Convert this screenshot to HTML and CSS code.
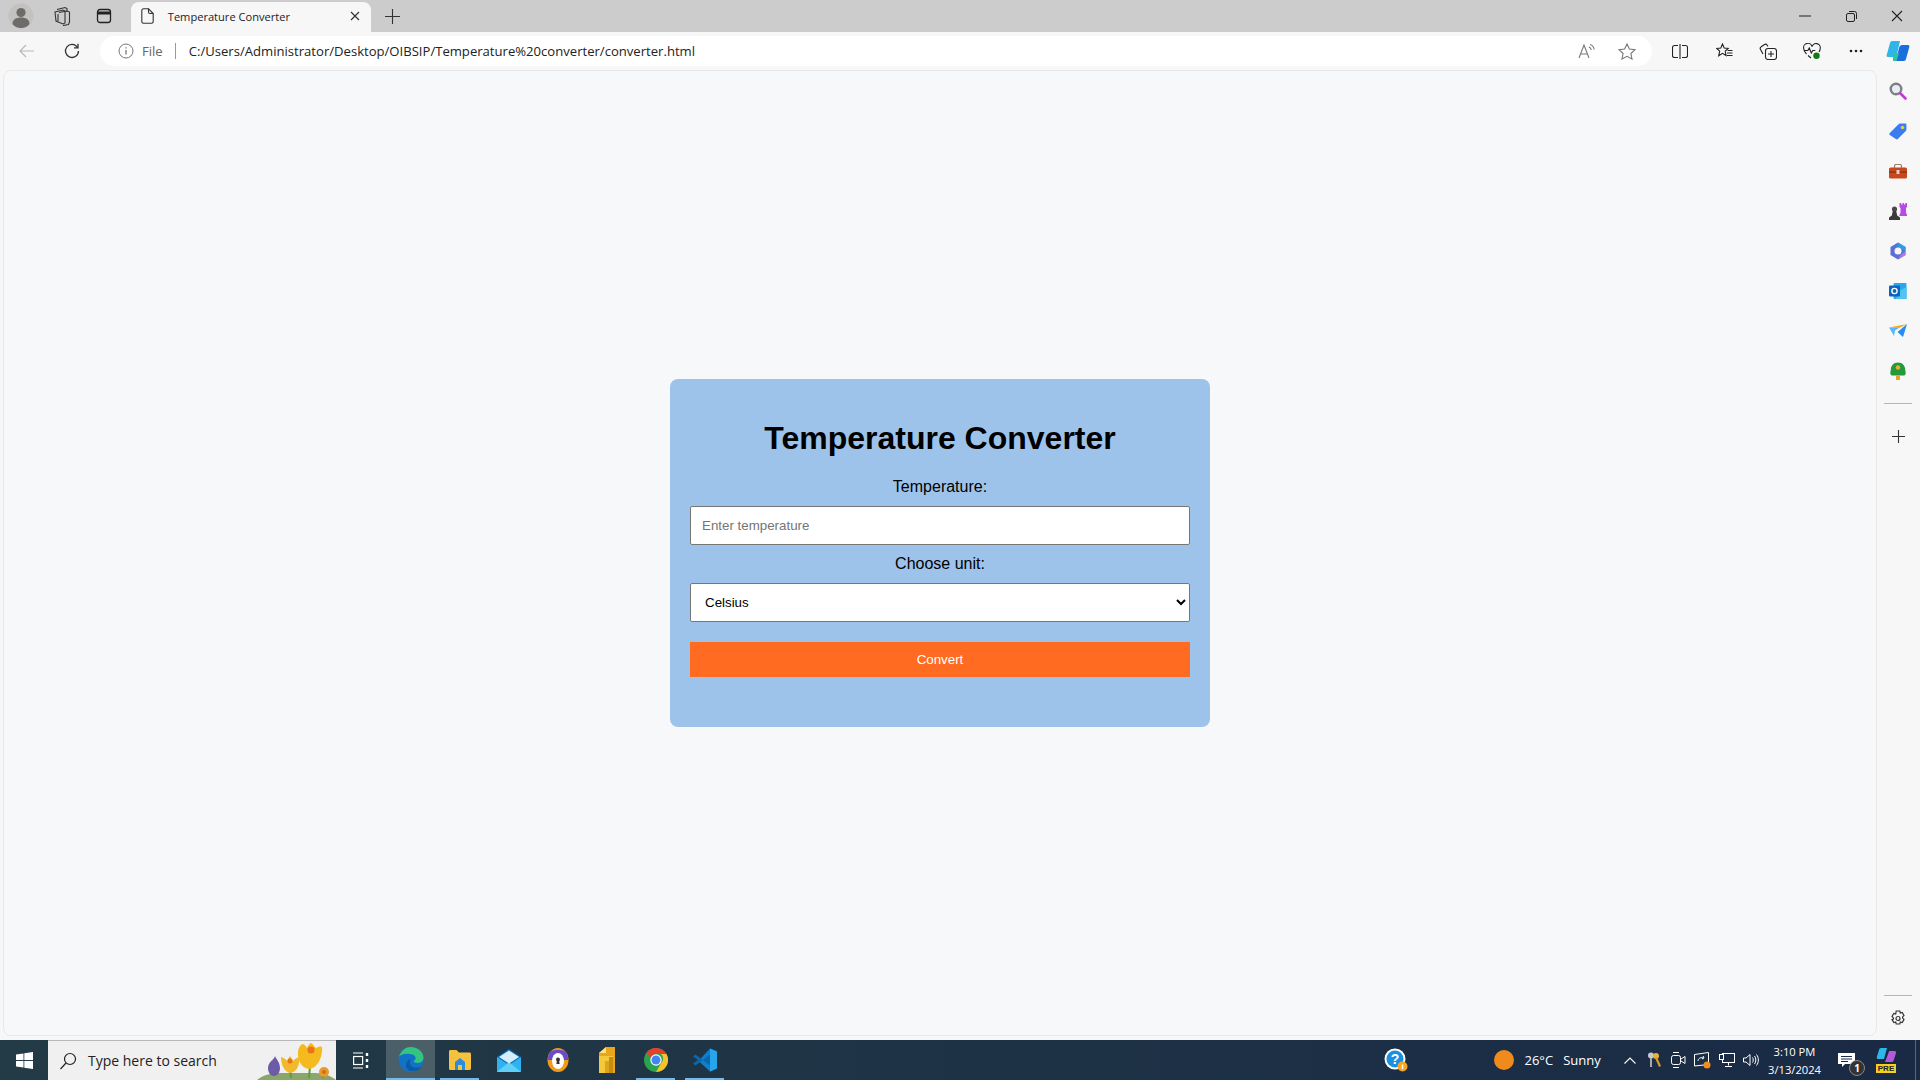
FILE: index.html
```html
<!DOCTYPE html>
<html lang="en">
<head>
    <meta charset="UTF-8">
    <title>Temperature Converter</title>
    <link rel="stylesheet" href="styles.css">
</head>
<body>
    <div class="tabbar">
        <div class="slot-tab">
            <svg width="26" height="26" viewBox="0 0 26 26"><circle cx="13" cy="13" r="12.5" fill="#c4c2bf"/><circle cx="13" cy="9.5" r="4.6" fill="#6e6c6a"/><path d="M4.5 21c0-4.5 3.6-6.5 8.5-6.5s8.500 2 8.500 6.500c-2 2.500-5 4-8.500 4s-6.500-1.500-8.500-4z" fill="#6e6c6a"/></svg>
        </div>
        <div class="slot-tab">
            <svg width="18" height="20" viewBox="0 0 18 20" fill="none" stroke="#333" stroke-width="1.1"><path d="M4 3.500 12 1.500l2 1v3"/><path d="M2 6 10 4l2 1v12l-2 1-7-3z" fill="#ccc"/><path d="M6 6.500 14 5l2.500 1v10l-1 2.500-5.500 1"/><path d="M5 8v7"/></svg>
        </div>
        <div class="slot-tab">
            <svg width="16" height="16" viewBox="0 0 16 16" fill="none" stroke="#222" stroke-width="1.3"><rect x="1.500" y="1.500" width="13" height="13" rx="2.500"/><path d="M1.500 5h13" stroke-width="3"/></svg>
        </div>
        <div class="tab">
            <svg class="tab-doc" width="13" height="16" viewBox="0 0 13 16" fill="none" stroke="#333" stroke-width="1.100"><path d="M2.500.8h5l4.700 4.700v8a1.700 1.700 0 0 1-1.700 1.700h-8A1.700 1.700 0 0 1 .8 13.500v-11A1.700 1.700 0 0 1 2.500.8z"/><path d="M7.500.8v3.200a1.500 1.500 0 0 0 1.500 1.500h3.200"/></svg>
            <span class="tab-title">Temperature Converter</span>
            <svg width="10" height="10" viewBox="0 0 10 10" stroke="#333" stroke-width="1.200"><path d="M1 1l8 8M9 1l-8 8"/></svg>
        </div>
        <div class="slot-tab slot-new">
            <svg width="15" height="15" viewBox="0 0 15 15" stroke="#333" stroke-width="1.100"><path d="M7.500 0v15M0 7.500h15"/></svg>
        </div>
        <div class="spacer"></div>
        <div class="slot-win">
            <svg width="12" height="2" viewBox="0 0 12 2" stroke="#222"><path d="M0 1h12"/></svg>
        </div>
        <div class="slot-win">
            <svg width="11" height="11" viewBox="0 0 11 11" fill="none" stroke="#222"><rect x=".5" y="2.500" width="8" height="8" rx="1.500"/><path d="M3 .5h5.500a2 2 0 0 1 2 2V8"/></svg>
        </div>
        <div class="slot-win">
            <svg width="12" height="12" viewBox="0 0 12 12" stroke="#222" stroke-width="1.100"><path d="M1 1l10 10M11 1 1 11"/></svg>
        </div>
    </div>

    <div class="toolbar">
        <div class="slot-nav">
            <svg width="16" height="14" viewBox="0 0 16 14" fill="none" stroke="#b8b8b8" stroke-width="1.200"><path d="M15 7H1M7 1 1 7l6 6"/></svg>
        </div>
        <div class="slot-nav">
            <svg width="16" height="16" viewBox="0 0 16 16" fill="none" stroke="#333" stroke-width="1.300"><path d="M13.500 4.500A6.500 6.500 0 1 0 14.500 8"/><path d="M14 .8v4h-4"/></svg>
        </div>
        <div class="address">
            <svg width="16" height="16" viewBox="0 0 16 16" fill="none" stroke="#777"><circle cx="8" cy="8" r="7"/><path d="M8 7v4.500M8 4.200v1.300" stroke-width="1.300"/></svg>
            <span class="addr-file">File</span>
            <span class="addr-sep"></span>
            <span class="addr-url">C:/Users/Administrator/Desktop/OIBSIP/Temperature%20converter/converter.html</span>
            <div class="slot-addr">
                <svg width="18" height="16" viewBox="0 0 18 16" fill="none" stroke="#777" stroke-width="1.100"><path d="M1 15 6 2l5 13M2.700 11h6.600"/><path d="M11 4c1.200.5 2 1.500 2.300 3M12 1.500c2.200.6 3.800 2.400 4.200 5"/></svg>
            </div>
            <div class="slot-addr">
                <svg width="18" height="17" viewBox="0 0 18 17" fill="none" stroke="#777" stroke-width="1.100"><path d="M9 1l2.400 5 5.600.7-4.100 3.800 1.100 5.500L9 13.300 4 16l1.100-5.500L1 6.700 6.600 6z"/></svg>
            </div>
        </div>
        <div class="slot-tool">
            <svg width="16" height="15" viewBox="0 0 16 15" fill="none" stroke="#222" stroke-width="1.100"><path d="M6 1.500H2.500a2 2 0 0 0-2 2v8a2 2 0 0 0 2 2H6M10 1.500h3.500a2 2 0 0 1 2 2v8a2 2 0 0 1-2 2H10M8 0v15"/></svg>
        </div>
        <div class="slot-tool">
            <svg width="17" height="16" viewBox="0 0 17 16" fill="none" stroke="#222" stroke-width="1.100"><path d="M6.500 1l1.700 4 4 .4-3 2.800.9 4.300-3.600-2.200-3.800 2.500 1-4.600L.8 5.400l4-.4z"/><path d="M11.500 7.500h5M11 10h5.500M11 12.500h5.500"/></svg>
        </div>
        <div class="slot-tool">
            <svg width="18" height="17" viewBox="0 0 18 17" fill="none" stroke="#222" stroke-width="1.100"><path d="M4 11 1.500 6.500a2 2 0 0 1 .7-2.700L5.500 1.500a2 2 0 0 1 2.700.7L9 3.500"/><rect x="6.500" y="5.500" width="11" height="11" rx="2.500"/><path d="M12 8v6M9 11h6"/></svg>
        </div>
        <div class="slot-tool">
            <svg width="18" height="17" viewBox="0 0 18 17"><path d="M3.500 11C1.500 9 .7 7.500.7 5.500A4.200 4.200 0 0 1 9 3.700a4.200 4.200 0 0 1 8.200 1.800c0 1.500-.5 2.500-1.200 3.500M.8 7.500h4l1.500-2.500 2 5 1.500-2.500h2.500M5 12.500 8 15" fill="none" stroke="#222" stroke-width="1.100"/><circle cx="13.500" cy="12.800" r="3.200" fill="#107c10"/></svg>
        </div>
        <div class="slot-tool">
            <svg width="14" height="4" viewBox="0 0 14 4" fill="#222"><circle cx="2" cy="2" r="1.300"/><circle cx="7" cy="2" r="1.300"/><circle cx="12" cy="2" r="1.300"/></svg>
        </div>
        <div class="slot-copilot">
            <svg width="24" height="24" viewBox="0 0 24 24"><path d="M6 2h8l-3 13c-.5 2-1.500 3-3.500 3H2c-1.200 0-1.700-1-1.300-2L4 4c.3-1.200 1-2 2-2z" fill="#2fb5e8"/><path d="M10 22h8c1 0 1.700-.8 2-2l3.300-12c.4-1-.1-2-1.300-2h-5.500c-2 0-3 1-3.500 3z" fill="#1a6fdc"/><path d="M7 14h6l-2.500 8H7z" fill="#2cc5a0"/></svg>
        </div>
    </div>

    <div class="main">
        <div class="page">
            <div class="converter">
                <h1>Temperature Converter</h1>
                <label for="temperature">Temperature:</label>
                <input type="number" id="temperature" placeholder="Enter temperature">
                <label for="unit">Choose unit:</label>
                <select id="unit">
                    <option>Celsius</option>
                    <option>Fahrenheit</option>
                    <option>Kelvin</option>
                </select>
                <button class="convert">Convert</button>
            </div>
        </div>
        <div class="sidebar">
            <div class="slot-side">
                <svg width="18" height="18" viewBox="0 0 18 18" fill="none"><circle cx="7" cy="7" r="5.300" stroke="#7d7f88" stroke-width="2.400" fill="#e8eef4"/><path d="M11.500 11.500 16.500 16.500" stroke="#c239d6" stroke-width="2.600" stroke-linecap="round"/></svg>
            </div>
            <div class="slot-side">
                <svg width="18" height="17" viewBox="0 0 18 17"><path d="M.8 10 9.500 1.200c.4-.4.800-.6 1.400-.6h5.500c.6 0 1 .4 1 1v5c0 .6-.2 1-.6 1.400l-8 8c-.6.600-1.400.600-2 0L.8 12c-.6-.6-.6-1.400 0-2z" fill="#3b7df0"/><circle cx="13.500" cy="4.500" r="1.800" fill="#f5c53a"/></svg>
            </div>
            <div class="slot-side">
                <svg width="18" height="15" viewBox="0 0 18 15"><path d="M5.500 4V2a1.500 1.500 0 0 1 1.500-1.500h4A1.500 1.500 0 0 1 12.500 2v2" fill="none" stroke="#9a7d6e" stroke-width="1.200"/><rect y="3.500" width="18" height="11" rx="1.500" fill="#c8481c"/><rect y="7.500" width="18" height="1.200" fill="#8c2f10"/><rect x="7.500" y="6" width="3" height="4" fill="#d8d4d0"/></svg>
            </div>
            <div class="slot-side">
                <svg width="18" height="18" viewBox="0 0 18 18"><path d="M10.500 1h1.700v1.500h1.300V1h1.500v1.500h1.300V1H18v4l-1 1v5l1 1.500V14h-7.500v-1.500L11.500 11V6l-1-1z" fill="#b64be8"/><circle cx="5.500" cy="7" r="2.600" fill="#4a4a4a"/><path d="M3.800 9h3.400l1 4.500 2.800 2V18H0v-2.500l2.800-2z" fill="#3a3a3a"/></svg>
            </div>
            <div class="slot-side">
                <svg width="18" height="18" viewBox="0 0 18 18"><path d="M9 .5 16.500 5v8L9 17.500 1.500 13V5z" fill="#5b6fd8"/><path d="M9 .5 16.500 5v4L9 5z" fill="#2d9fe0"/><path d="M9 17.500l7.500-4.500V9l-5 4z" fill="#a77fdc"/><circle cx="9" cy="9" r="3.500" fill="#f7f7f7"/></svg>
            </div>
            <div class="slot-side">
                <svg width="18" height="18" viewBox="0 0 18 18"><rect x="4.500" y="1" width="13" height="16" rx="1" fill="#28a8ea"/><path d="M10 9l7.500-4v12H7z" fill="#50c4f0"/><rect y="3.500" width="11" height="11" rx="1" fill="#0a64c0"/><circle cx="5.500" cy="9" r="2.600" fill="none" stroke="#fff" stroke-width="1.400"/></svg>
            </div>
            <div class="slot-side">
                <svg width="18" height="14" viewBox="0 0 18 14"><path d="M0 3.500 18 0 10 4z" fill="#f5a623"/><path d="M18 0 14 13 8.500 8z" fill="#2a8bf0"/><path d="M0 3.500 10 4 6 6.500 5 12z" fill="#5ab8f5"/></svg>
            </div>
            <div class="slot-side">
                <svg width="16" height="18" viewBox="0 0 16 18"><path d="M1.500 13.500C0 12.500 0 10 .8 8.500.5 4 3.500.5 8 .5s7.500 3.500 7.200 8c.8 1.500.8 4-.7 5z" fill="#259a3c"/><rect x="6" y="13.500" width="4" height="4.500" fill="#e8a22a"/><circle cx="8" cy="5.500" r="2.200" fill="#e8b02a"/></svg>
            </div>
            <div class="side-rule side-rule-mid"></div>
            <div class="slot-side">
                <svg width="13" height="13" viewBox="0 0 13 13" stroke="#333" stroke-width="1.100"><path d="M6.500 0v13M0 6.500h13"/></svg>
            </div>
            <div class="spacer"></div>
            <div class="side-rule"></div>
            <div class="slot-side">
                <svg width="16" height="17" viewBox="0 0 16 17" fill="none" stroke="#333" stroke-width="1.200"><path d="M6.200 1h3.600l.5 2 1.900-.6 1.800 3-1.400 1.500v1.200l1.400 1.500-1.800 3-1.900-.6-.5 2H6.200l-.5-2-1.900.6-1.800-3L3.400 9.100V7.900L2 6.400l1.800-3 1.900.6z"/><circle cx="8" cy="8.500" r="2"/></svg>
            </div>
        </div>
    </div>

    <div class="taskbar">
        <div class="start">
            <svg width="17" height="17" viewBox="0 0 17 17" fill="#fff"><path d="M0 2.500 7.500 1.400v6.600H0zM8.300 1.300 17 0v8H8.300zM0 9h7.500v6.600L0 14.500zM8.300 9H17v8l-8.700-1.300z"/></svg>
        </div>
        <div class="search">
            <svg width="18" height="18" viewBox="0 0 18 18" fill="none" stroke="#222" stroke-width="1.200"><circle cx="11" cy="7" r="5.500"/><path d="M7 11 1.500 17"/></svg>
            <span class="search-text">Type here to search</span>
            <div class="spacer"></div>
            <svg class="flowers" width="79" height="39" viewBox="0 1 79 39">
                <path d="M0 40c6-5 14-7 22-7h36c9 0 16 3 21 7z" fill="#8aa66a"/>
                <path d="M34 38 33 28M52 38 53 26M66 38 66 34" stroke="#5f9e3a" stroke-width="2"/>
                <path d="M18 16c1 3 5 6 5 12 0 5-3 8-6 8s-6-3-6-8c0-6 6-8 7-12z" fill="#6d5ba8"/>
                <path d="M24 17c3 1 5 2 6 4 1-2 2-4 3-5 1 1 2 3 3 5 1-2 4-3 6-4 1 6-1 15-9 16-6-1-9-9-9-16z" fill="#f2b92a"/>
                <circle cx="33" cy="21" r="2.500" fill="#e8731a"/>
                <path d="M41 11c1-4 3-7 5-7 1 0 3 2 4 4 1-3 3-5 4-5 1 0 3 3 5 5 2-1 4-2 6-1 1 7-3 21-13 22-8-1-12-10-11-18z" fill="#f5ba1e"/>
                <circle cx="54" cy="10" r="3.500" fill="#e8731a"/>
                <circle cx="67" cy="32" r="5" fill="#e89a2a"/>
                <circle cx="67" cy="32" r="2" fill="#c9701a"/>
            </svg>
        </div>
        <div class="slot-view">
            <svg width="16" height="17" viewBox="0 0 16 17" fill="none" stroke="#fff" stroke-width="1.200"><path d="M0 1h10M0 16h10"/><rect x=".6" y="4.500" width="9" height="8"/><path d="M14 1v3M14 7v3M14 13v3" stroke-width="2.400"/></svg>
        </div>
        <div class="slot-app app-active">
            <svg width="26" height="27" viewBox="0 0 26 27"><circle cx="13" cy="13.500" r="12.500" fill="#1173c5"/><path d="M1 11C3 4 8 1 13 1c7 0 12.500 5 12.500 11 0 3-3 5-6 5-2 0-4-1-4-2 3-1 3-5-1-6.500C9 7 3 8 1 11z" fill="#33c481"/><path d="M14 25c-3 0-6-2-6-6 0-3 2-5 5-6-1 1-2 3-1 5 1 3 5 5 11 3-2 3-5 4-9 4z" fill="#0c59a4"/></svg>
        </div>
        <div class="slot-app app-open">
            <svg width="22" height="20" viewBox="0 0 22 20"><path d="M0 1.500C0 .6.600 0 1.500 0h6L10 2.500h10.500c.9 0 1.500.6 1.500 1.500v14.500c0 .9-.6 1.500-1.500 1.500h-19C.6 20 0 19.400 0 18.500z" fill="#f5c13f"/><path d="M6 12l5-4 5 4v8H6z" fill="#2a8ddc"/><rect x="9" y="15" width="4" height="5" fill="#f5c13f"/></svg>
        </div>
        <div class="slot-app">
            <svg width="24" height="23" viewBox="0 0 24 23"><path d="M0 8 12 0l12 8v15H0z" fill="#0c6fc0"/><path d="M0 8l12 8 12-8v15H0z" fill="#2eb2f0"/><path d="M0 23 12 13l12 10z" fill="#5fd0f7"/><path d="M2 8 12 1.500 22 8 12 14.500z" fill="#d4eefc"/></svg>
        </div>
        <div class="slot-app">
            <svg width="22" height="24" viewBox="0 0 22 24"><ellipse cx="11" cy="12" rx="10.500" ry="12" fill="#f29a1c"/><path d="M3 4c4-3 12-3 16 0 2 3 2 6 2 8H1c0-2 0-5 2-8z" fill="#6c4bc8"/><ellipse cx="11" cy="13" rx="6" ry="8" fill="#fff"/><circle cx="11" cy="11.500" r="2" fill="#333"/><path d="M10 12h2l.6 4h-3.200z" fill="#333"/></svg>
        </div>
        <div class="slot-app">
            <svg width="20" height="26" viewBox="0 0 20 26"><path d="M2 6 9 0h9v26H2z" fill="#e8a61c"/><path d="M2 6 9 0v6z" fill="#fbe28a"/><rect x="2" y="9" width="14" height="17" fill="#f4c93a"/><rect x="8" y="14" width="4" height="12" fill="#e0a41a"/><rect x="12" y="10" width="4" height="16" fill="#c98c12"/></svg>
        </div>
        <div class="slot-app app-open">
            <svg width="24" height="24" viewBox="0 0 24 24"><circle cx="12" cy="12" r="12" fill="#2ba24c"/><path d="M12 0a12 12 0 0 1 10.400 6H12A6 6 0 0 0 6.500 9.500L2.500 4.500A12 12 0 0 1 12 0z" fill="#e3412e"/><path d="M22.400 6A12 12 0 0 1 12 24l5.200-9A6 6 0 0 0 17 6z" fill="#f8c22c"/><circle cx="12" cy="12" r="5.700" fill="#fff"/><circle cx="12" cy="12" r="4.500" fill="#4285f4"/></svg>
        </div>
        <div class="slot-app app-open">
            <svg width="24" height="24" viewBox="0 0 24 24"><path d="M17 .5 24 3.500v17L17 23.500 5.500 13z" fill="#0f7fcc"/><path d="M17 .5V23.500l7-3v-17z" fill="#27a5ea"/><path d="M17 17.500 6 9 2.500 6.500 0 8.500 5 12 0 15.500 2.500 17.500 17 6.500z" fill="#0c66ad"/></svg>
        </div>
        <div class="spacer"></div>
        <div class="tray-help">
            <svg width="24" height="24" viewBox="0 0 24 24"><circle cx="11" cy="11" r="10.500" fill="#fff"/><circle cx="11" cy="11" r="8.500" fill="#1c8fe0"/><text x="11" y="16" text-anchor="middle" class="help-mark">?</text><circle cx="18.500" cy="18.500" r="5" fill="#f5a623"/><path d="M18.500 16.500v4.500" stroke="#fff" stroke-width="1.500"/></svg>
        </div>
        <div class="weather">
            <svg width="20" height="20" viewBox="0 0 20 20"><circle cx="10" cy="10" r="10" fill="#f08a1c"/></svg>
            <span class="temp">26°C</span>
            <span>Sunny</span>
        </div>
        <div class="tray">
            <div class="slot-tray">
                <svg width="12" height="7" viewBox="0 0 12 7" fill="none" stroke="#fff" stroke-width="1.100"><path d="M.5 6.500 6 1l5.500 5.500"/></svg>
            </div>
            <div class="slot-tray">
                <svg width="14" height="16" viewBox="0 0 14 16"><circle cx="4" cy="3.500" r="3" fill="#c9c9c9"/><path d="M3 6h2v9H3z" fill="#aaa"/><circle cx="9" cy="4" r="3" fill="#e8b23a"/><path d="M8 6l2-1 4 9-2 1z" fill="#d99a28"/></svg>
            </div>
            <div class="slot-tray">
                <svg width="15" height="16" viewBox="0 0 15 16" fill="none" stroke="#fff"><rect x=".5" y="3.500" width="9" height="9" rx="2"/><path d="M10 7l4-2.500v7L10 9M2 .5h6M2 15.500h6"/></svg>
            </div>
            <div class="slot-tray">
                <svg width="17" height="17" viewBox="0 0 17 17"><path d="M.5 2.500l14-2v12l-14 1.500z" fill="none" stroke="#fff"/><path d="M4 9c0-2 2-4 5-3M9 4l1 2-2 1" fill="none" stroke="#fff"/><circle cx="13" cy="13" r="3.500" fill="#f28c1c"/></svg>
            </div>
            <div class="slot-tray">
                <svg width="16" height="15" viewBox="0 0 16 15" fill="none" stroke="#fff"><rect x="3.500" y=".5" width="12" height="9"/><rect x=".5" y="1.500" width="4" height="5" fill="#1a2b45"/><path d="M9.500 9.500v3M6 13.500h7"/></svg>
            </div>
            <div class="slot-tray">
                <svg width="16" height="14" viewBox="0 0 16 14" fill="none" stroke="#fff"><path d="M.5 5h2.500L7 1.500v11L3 9H.5z"/><path d="M9.500 4.500c1 1.500 1 3.500 0 5M11.500 3c1.800 2.500 1.800 5.500 0 8M13.500 1.500c2.500 3.500 2.500 7.500 0 11"/></svg>
            </div>
        </div>
        <div class="clock">
            <span>3:10 PM</span>
            <span>3/13/2024</span>
        </div>
        <div class="slot-note">
            <svg width="17" height="15" viewBox="0 0 17 15"><path d="M0 0h17v11H7l-3 3v-3H0z" fill="#fff"/><path d="M3 3.500h11M3 6h11M3 8.500h7" stroke="#1a2b45"/></svg>
            <span class="note-badge">1</span>
        </div>
        <div class="slot-pre">
            <svg width="20" height="20" viewBox="0 0 20 20"><path d="M5 0h6L8 11H2C1 11 .5 10 .8 9L3 2c.3-1.200 1-2 2-2z" fill="#2fb5e8"/><path d="M9 14h7c1 0 1.500-.8 1.800-2L20 5c.3-1-.3-2-1.300-2h-5.500z" fill="#b45ad8"/></svg>
            <span class="pre-tag">PRE</span>
        </div>
        <div class="desktop-edge"></div>
    </div>
</body>
</html>
```

FILE: styles.css
```css
* {
    box-sizing: border-box;
}
html, body {
    height: 100%;
}
body {
    margin: 0;
    display: flex;
    flex-direction: column;
    overflow: hidden;
    font-family: "Open Sans", "Liberation Sans", sans-serif;
    background-color: #f7f7f7;
}
.spacer {
    flex: 1;
}

/* tab strip */
.tabbar {
    display: flex;
    align-items: flex-end;
    height: 32px;
    background-color: #cccccc;
}
.slot-tab, .slot-win {
    display: flex;
    align-items: center;
    justify-content: center;
    height: 32px;
}
.slot-tab {
    width: 41.6px;
}
.slot-new {
    margin-left: 1px;
}
.slot-win {
    width: 46px;
}
.tab {
    display: flex;
    align-items: center;
    width: 240px;
    height: 30px;
    margin-left: 6px;
    padding: 0 11px 2px 10px;
    border-radius: 8px 8px 0 0;
    background-color: #f7f7f7;
    font-size: 11.1px;
    color: #222;
}
.tab-title {
    flex: 1;
    margin-left: 14px;
}

/* address row */
.toolbar {
    display: flex;
    align-items: center;
    height: 38px;
    padding: 0 2px 0 6px;
    background-color: #f7f7f7;
}
.slot-nav {
    display: flex;
    align-items: center;
    justify-content: center;
    width: 42px;
    height: 30px;
    margin-right: 3px;
}
.address {
    flex: 1;
    display: flex;
    align-items: center;
    height: 30px;
    margin: 0 6px 0 4px;
    padding: 0 5px 0 18px;
    border-radius: 15px;
    background-color: #ffffff;
    font-size: 13.1px;
    color: #222;
}
.addr-file {
    margin-left: 8px;
    color: #666;
}
.addr-sep {
    width: 1px;
    height: 16px;
    margin: 0 13px 0 12px;
    background-color: #999;
}
.addr-url {
    flex: 1;
}
.slot-addr {
    display: flex;
    align-items: center;
    justify-content: center;
    width: 40px;
}
.slot-tool {
    display: flex;
    align-items: center;
    justify-content: center;
    width: 44px;
}
.slot-copilot {
    display: flex;
    justify-content: center;
    width: 40px;
}

/* page + edge sidebar */
.main {
    flex: 1;
    display: flex;
    min-height: 0;
}
.page {
    flex: 1;
    display: flex;
    align-items: center;
    justify-content: center;
    margin: 0 1px 4px 3px;
    border: 1px solid #e8e8e8;
    border-radius: 8px;
    background-color: #f7f8fa;
}
.converter {
    display: flex;
    flex-direction: column;
    align-items: center;
    width: 540px;
    height: 348px;
    padding: 20px;
    border-radius: 8px;
    background-color: #9ec3ea;
    font-family: "Liberation Sans", Arial, sans-serif;
}
.converter h1 {
    margin: 21px 0 20px;
    font-size: 32px;
    line-height: 37px;
    color: #000;
}
.converter label {
    height: 20px;
    line-height: 20px;
    font-size: 16px;
    color: #000;
}
.converter input, .converter select {
    width: 500px;
    height: 39px;
    margin: 9px 0;
    border: 1px solid #767676;
    border-radius: 2px;
    background-color: #ffffff;
    font-family: inherit;
    font-size: 13.33px;
}
.converter input {
    padding: 0 11px;
}
.converter select {
    margin-bottom: 20px;
    padding-left: 10px;
    color: #000;
}
.convert {
    width: 500px;
    height: 35px;
    border: none;
    background-color: #ff6b21;
    color: #ffffff;
    font-family: inherit;
    font-size: 13.33px;
}
.sidebar {
    display: flex;
    flex-direction: column;
    align-items: center;
    width: 42px;
    padding: 1px 2px 2px 0;
}
.slot-side {
    display: flex;
    align-items: center;
    justify-content: center;
    flex: none;
    width: 40px;
    height: 40px;
}
.side-rule {
    flex: none;
    width: 28px;
    height: 1px;
    margin: 3px 0 2px;
    background-color: #b5b5b5;
}
.side-rule-mid {
    margin: 12px 0;
}

/* windows taskbar */
.taskbar {
    display: flex;
    align-items: center;
    height: 40px;
    padding-right: 4px;
    background: linear-gradient(90deg, #223b45, #1a2a45);
    color: #ffffff;
}
.start {
    display: flex;
    align-items: center;
    justify-content: center;
    width: 48px;
    height: 40px;
}
.search {
    display: flex;
    align-items: center;
    width: 288px;
    height: 40px;
    padding: 0 0 0 11px;
    border-top: 1px solid #b8b8b8;
    background-color: #f0f0f0;
    color: #222;
    font-size: 14px;
}
.search-text {
    margin-left: 11px;
}
.flowers {
    align-self: flex-end;
}
.slot-view {
    display: flex;
    align-items: center;
    justify-content: center;
    width: 50px;
}
.slot-app {
    display: flex;
    align-items: center;
    justify-content: center;
    width: 49px;
    height: 40px;
    position: relative;
}
.app-active {
    background-color: #4a5f68;
    border-bottom: 2px solid #76b9ed;
}
.app-open::after {
    content: "";
    position: absolute;
    left: 5px;
    right: 5px;
    bottom: 0;
    height: 2px;
    background-color: #76b9ed;
}
.tray-help {
    display: flex;
    justify-content: center;
    width: 30px;
    margin-right: 83px;
}
.help-mark {
    font-family: "Liberation Sans", sans-serif;
    font-size: 14px;
    font-weight: bold;
    fill: #ffffff;
}
.weather {
    display: flex;
    align-items: center;
    gap: 11px;
    width: 124px;
    font-size: 13px;
}
.temp {
    margin-right: -1px;
}
.tray {
    display: flex;
    align-items: center;
}
.slot-tray {
    display: flex;
    align-items: center;
    justify-content: center;
    width: 24.25px;
}
.clock {
    display: flex;
    flex-direction: column;
    align-items: center;
    gap: 3px;
    width: 63px;
    font-size: 11.2px;
    line-height: 15px;
}
.slot-note {
    position: relative;
    display: flex;
    justify-content: center;
    width: 40px;
}
.note-badge {
    position: absolute;
    top: 7px;
    left: 23px;
    width: 16px;
    height: 16px;
    border: 1px solid #888;
    border-radius: 50%;
    background-color: #333;
    font-size: 10px;
    font-weight: bold;
    line-height: 14px;
    text-align: center;
}
.slot-pre {
    position: relative;
    display: flex;
    justify-content: center;
    width: 40px;
    height: 24px;
}
.pre-tag {
    position: absolute;
    left: 10px;
    bottom: -1px;
    width: 20px;
    height: 9px;
    background-color: #f5d020;
    color: #222;
    font-family: "Liberation Sans", sans-serif;
    font-size: 8px;
    font-weight: bold;
    line-height: 9px;
    text-align: center;
}
.desktop-edge {
    width: 1px;
    height: 40px;
    margin-left: 9px;
    background-color: #5a6678;
}
```
